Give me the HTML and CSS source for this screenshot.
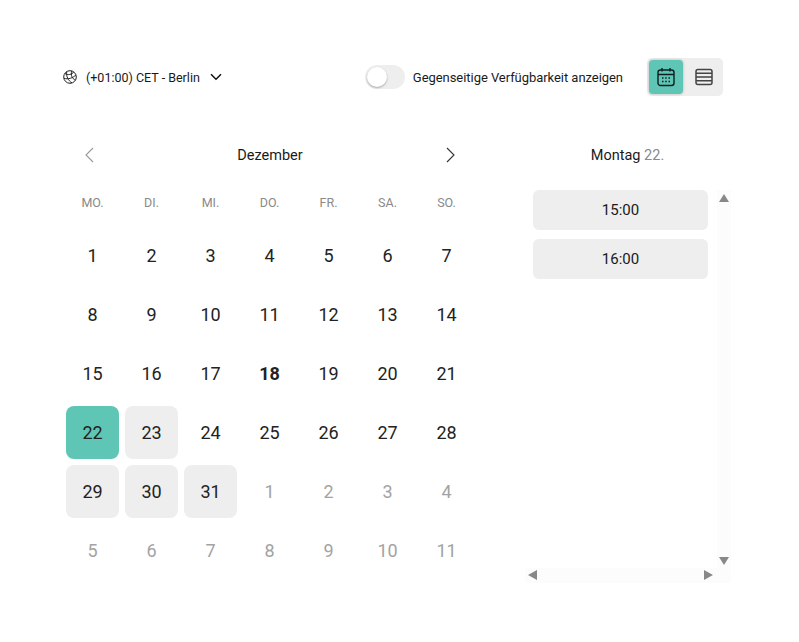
FILE: index.html
```html
<!DOCTYPE html>
<html lang="de">
<head>
    <meta charset="UTF-8">
    <meta name="viewport" content="width=device-width, initial-scale=1.0">
    <title>Terminkalender</title>
    <link rel="stylesheet" href="styles.css">
</head>
<body>
    <div class="container">
        <header class="toolbar">
            <button class="timezone" type="button">
                <svg class="globe" width="14" height="14" viewBox="0 0 14 14" fill="none" stroke="#222" stroke-width="1">
                    <circle cx="7" cy="7" r="6.300"/>
                    <path d="M1.800 3.500C5 5.500 9 4.500 10.800 1.900M.9 8.300C5 9.700 10 8 13 4.800"/>
                    <path d="M3.800 1.500C3 6 5 10.500 9 12.900M8.800 .9C7.500 5 9 9 12.600 10"/>
                </svg>
                <span>(+01:00) CET - Berlin</span>
                <svg class="chevron" width="12" height="8" viewBox="0 0 12 8" fill="none" stroke="#111" stroke-width="1.5"><path d="M1 1.200l5 5 5-5"/></svg>
            </button>
            <div class="toolbar-right">
                <span class="switch"><span class="switch-knob"></span></span>
                <span class="switch-label">Gegenseitige Verfügbarkeit anzeigen</span>
                <div class="view-toggle">
                    <button class="view-btn active" type="button">
                        <svg width="18" height="20" viewBox="0 0 18 20" fill="none" stroke="#0d1f20" stroke-width="1.400">
                            <rect x="1" y="3" width="16" height="15.500" rx="2.500"/>
                            <path d="M1 7.500h16M5 1v3.500M13 1v3.500"/>
                            <path d="M5 11h1.500M8.200 11h1.500M11.500 11h1.500M5 14.500h1.500M8.200 14.500h1.500M11.500 14.500h1.500"/>
                        </svg>
                    </button>
                    <button class="view-btn" type="button">
                        <svg width="18" height="18" viewBox="0 0 18 18" fill="none" stroke="#444" stroke-width="1.500">
                            <rect x="1" y="1.500" width="16" height="15" rx="2"/>
                            <path d="M1 5.200h16M1 9h16M1 12.800h16"/>
                        </svg>
                    </button>
                </div>
            </div>
        </header>

        <main class="content">
            <section class="calendar">
                <div class="month-nav">
                    <svg width="10" height="16" viewBox="0 0 10 16" fill="none" stroke="#999" stroke-width="1.100"><path d="M9 1L2 8l7 7"/></svg>
                    <span class="month-name">Dezember</span>
                    <svg width="10" height="16" viewBox="0 0 10 16" fill="none" stroke="#333" stroke-width="1.100"><path d="M1 1l7 7-7 7"/></svg>
                </div>
                <div class="weekdays">
                    <span>MO.</span><span>DI.</span><span>MI.</span><span>DO.</span><span>FR.</span><span>SA.</span><span>SO.</span>
                </div>
                <div class="days">
                    <span class="day">1</span><span class="day">2</span><span class="day">3</span><span class="day">4</span><span class="day">5</span><span class="day">6</span><span class="day">7</span>
                    <span class="day">8</span><span class="day">9</span><span class="day">10</span><span class="day">11</span><span class="day">12</span><span class="day">13</span><span class="day">14</span>
                    <span class="day">15</span><span class="day">16</span><span class="day">17</span><span class="day today">18</span><span class="day">19</span><span class="day">20</span><span class="day">21</span>
                    <span class="day selected">22</span><span class="day available">23</span><span class="day">24</span><span class="day">25</span><span class="day">26</span><span class="day">27</span><span class="day">28</span>
                    <span class="day available">29</span><span class="day available">30</span><span class="day available">31</span><span class="day muted">1</span><span class="day muted">2</span><span class="day muted">3</span><span class="day muted">4</span>
                    <span class="day muted">5</span><span class="day muted">6</span><span class="day muted">7</span><span class="day muted">8</span><span class="day muted">9</span><span class="day muted">10</span><span class="day muted">11</span>
                </div>
            </section>

            <section class="slots">
                <h2 class="slots-title">Montag <span class="slots-date">22.</span></h2>
                <div class="slots-frame">
                    <div class="slots-list">
                        <button class="slot" type="button">15:00</button>
                        <button class="slot" type="button">16:00</button>
                    </div>
                    <div class="scroll-v">
                        <span class="arrow arrow-up"></span>
                        <span class="arrow arrow-down"></span>
                    </div>
                    <div class="scroll-h">
                        <span class="arrow arrow-left"></span>
                        <span class="arrow arrow-right"></span>
                    </div>
                </div>
            </section>
        </main>
    </div>
</body>
</html>
```

FILE: styles.css
```css
* {
    box-sizing: border-box;
    margin: 0;
    padding: 0;
    font-family: Roboto, 'Liberation Sans', sans-serif;
}

body {
    background-color: #fff;
    color: #1a1a1a;
}

button {
    border: none;
    background: none;
    color: inherit;
}

.container {
    width: 799px;
    height: 642px;
    padding: 58px 68px 0 63px;
}

.toolbar {
    display: flex;
    justify-content: space-between;
    align-items: center;
    height: 38px;
    margin-right: 8px;
}

.timezone {
    display: flex;
    align-items: center;
    gap: 9px;
    font-size: 12.5px;
}

.chevron {
    margin-left: 1px;
}

.toolbar-right {
    display: flex;
    align-items: center;
}

.switch {
    width: 40px;
    height: 24px;
    border-radius: 12px;
    background-color: #eee;
    padding: 2px;
    margin-right: 8px;
}

.switch-knob {
    display: block;
    width: 20px;
    height: 20px;
    border-radius: 50%;
    background-color: #fff;
    box-shadow: 0 1px 2px rgba(0, 0, 0, 0.3);
}

.switch-label {
    font-size: 13px;
    letter-spacing: -0.05px;
    margin-right: 24px;
}

.view-toggle {
    display: flex;
    width: 76px;
    height: 38px;
    padding: 2px 0 2px 2px;
    background-color: #eee;
    border-radius: 5px;
}

.view-btn {
    display: flex;
    align-items: center;
    justify-content: center;
    width: 39px;
    height: 34px;
    border-radius: 4px;
}

.view-btn.active {
    width: 34px;
    margin-right: 1px;
    background-color: #5fc6b6;
    box-shadow: 0 0 3px rgba(0, 0, 0, 0.25);
}

.content {
    display: flex;
    margin-top: 39px;
}

.calendar {
    width: 413px;
    margin-left: 3px;
}

.month-nav {
    display: flex;
    justify-content: space-between;
    align-items: center;
    height: 40px;
    padding: 0 23px 0 18px;
}

.month-name {
    font-size: 14.5px;
}

.weekdays {
    display: grid;
    grid-template-columns: repeat(7, 53px);
    column-gap: 6px;
    margin-top: 20px;
    font-size: 12.5px;
    color: #8a8a8a;
    text-align: center;
    line-height: 16px;
}

.days {
    display: grid;
    grid-template-columns: repeat(7, 53px);
    grid-auto-rows: 53px;
    gap: 6px;
    margin-top: 18px;
}

.day {
    display: flex;
    align-items: center;
    justify-content: center;
    font-size: 18px;
    border-radius: 8px;
    color: #222;
}

.today {
    font-weight: 700;
}

.selected {
    background-color: #5fc6b6;
}

.available {
    background-color: #eee;
}

.muted {
    color: #a3a3a3;
}

.slots {
    width: 204px;
    margin-left: 48px;
}

.slots-title {
    font-size: 14.5px;
    font-weight: 400;
    height: 40px;
    line-height: 42px;
    text-align: center;
    padding-right: 3px;
}

.slots-date {
    color: #888;
}

.slots-frame {
    position: relative;
    height: 378px;
    margin-top: 15px;
    padding: 0 23px 0 6px;
}

.slots-list {
    display: flex;
    flex-direction: column;
    gap: 9px;
}

.slot {
    height: 40px;
    background-color: #eee;
    border-radius: 6px;
    font-size: 15px;
}

/* scrollbars drawn over the frame */
.scroll-v {
    position: absolute;
    top: 0;
    right: 0;
    width: 14px;
    height: 378px;
    background-color: #fcfcfc;
}

.scroll-h {
    position: absolute;
    left: -2px;
    top: 378px;
    width: 206px;
    height: 15px;
    background-color: #fcfcfc;
}

.arrow {
    position: absolute;
    width: 0;
    height: 0;
    border-style: solid;
    border-color: transparent;
}

.arrow-up {
    top: 4px;
    left: 2px;
    border-width: 0 5px 8px;
    border-bottom-color: #888;
}

.arrow-down {
    bottom: 3px;
    left: 2px;
    border-width: 8px 5px 0;
    border-top-color: #888;
}

.arrow-left {
    top: 2px;
    left: 3px;
    border-width: 5px 9px 5px 0;
    border-right-color: #888;
}

.arrow-right {
    top: 2px;
    right: 18px;
    border-width: 5px 0 5px 9px;
    border-left-color: #888;
}
```
